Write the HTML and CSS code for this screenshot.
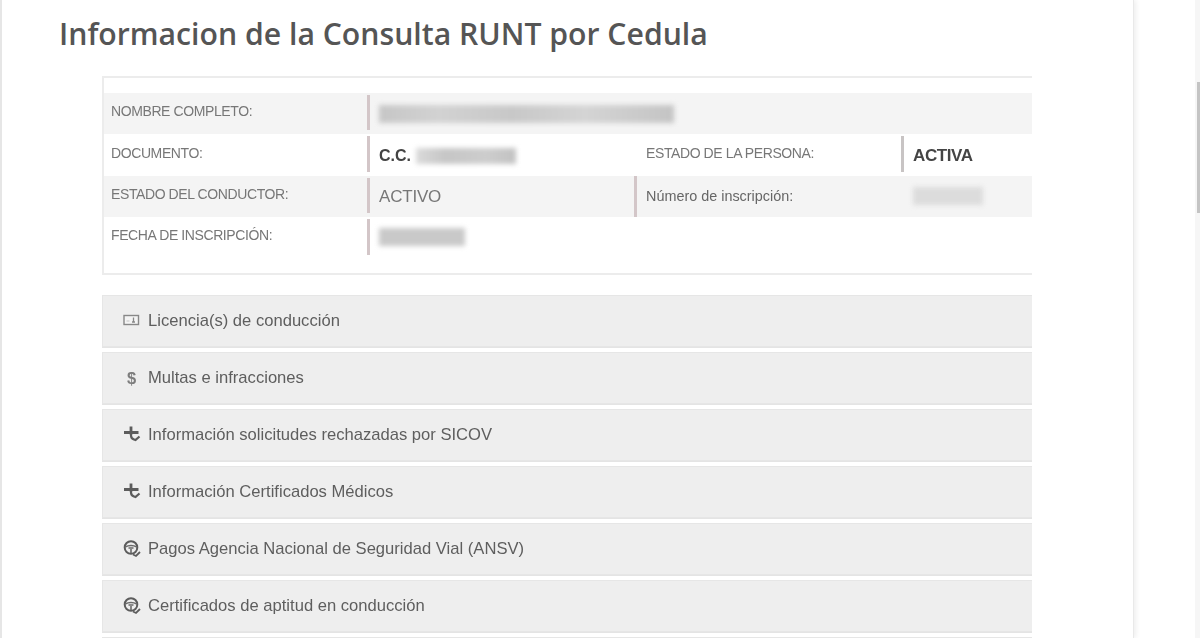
FILE: index.html
```html
<!DOCTYPE html>
<html lang="es">
<head>
  <meta charset="UTF-8" />
  <title>Consulta RUNT por Cedula</title>
  <link rel="stylesheet" href="styles.css">
</head>
<body>
  <div class="page">
    <main class="post">
      <h2 class="post-title">Informacion de la Consulta RUNT por Cedula</h2>

      <div class="capture">
        <section class="person">
          <div class="row shaded">
            <div class="label">NOMBRE COMPLETO:</div>
            <div class="value first"><span class="blur name-blur"></span></div>
          </div>
          <div class="row">
            <div class="label">DOCUMENTO:</div>
            <div class="value first doc"><b>C.C.</b><span class="blur doc-blur"></span></div>
            <div class="label second">ESTADO DE LA PERSONA:</div>
            <div class="value last"><b class="activa">ACTIVA</b></div>
          </div>
          <div class="row shaded">
            <div class="label">ESTADO DEL CONDUCTOR:</div>
            <div class="value first short big">ACTIVO</div>
            <div class="ruled">Número de inscripción:</div>
            <div class="value plain"><span class="blur num-blur"></span></div>
          </div>
          <div class="row">
            <div class="label">FECHA DE INSCRIPCIÓN:</div>
            <div class="value first"><span class="blur date-blur"></span></div>
          </div>
        </section>

        <div class="acc">
          <svg class="ico" viewBox="0 0 18 18"><rect x="1" y="3.500" width="14.500" height="9" fill="#f4f4f4" stroke="#888" stroke-width="1.400"/><path d="M10.500 5.500v5M9 10h3" stroke="#888" stroke-width="1.300"/><path d="M3.500 9h3" stroke="#c4c4c4"/></svg>
          Licencia(s) de conducción
        </div>
        <div class="acc">
          <span class="ico dollar">$</span>
          Multas e infracciones
        </div>
        <div class="acc">
          <svg class="ico" viewBox="0 0 18 18"><path d="M1 6.500h14.500M8 0.500v8" stroke="#5c5c5c" stroke-width="2.800" fill="none"/><path d="M8 8v1.500q0 3 3 4l1.500 0.500 4-3.500" stroke="#5c5c5c" stroke-width="2.200" fill="none"/></svg>
          Información solicitudes rechazadas por SICOV
        </div>
        <div class="acc">
          <svg class="ico" viewBox="0 0 18 18"><path d="M1 6.500h14.500M8 0.500v8" stroke="#5c5c5c" stroke-width="2.800" fill="none"/><path d="M8 8v1.500q0 3 3 4l1.500 0.500 4-3.500" stroke="#5c5c5c" stroke-width="2.200" fill="none"/></svg>
          Información Certificados Médicos
        </div>
        <div class="acc">
          <svg class="ico" viewBox="0 0 18 18"><circle cx="8" cy="7.500" r="6.300" fill="none" stroke="#5c5c5c" stroke-width="2"/><path d="M2 7q6-3 12 0M5.500 8h5M8 9v4" stroke="#6a6a6a" stroke-width="1.600" fill="none"/><path d="M10 14.500l3 1.500 4-4" stroke="#5c5c5c" stroke-width="1.800" fill="none"/></svg>
          Pagos Agencia Nacional de Seguridad Vial (ANSV)
        </div>
        <div class="acc">
          <svg class="ico" viewBox="0 0 18 18"><circle cx="8" cy="7.500" r="6.300" fill="none" stroke="#5c5c5c" stroke-width="2"/><path d="M2 7q6-3 12 0M5.500 8h5M8 9v4" stroke="#6a6a6a" stroke-width="1.600" fill="none"/><path d="M10 14.500l3 1.500 4-4" stroke="#5c5c5c" stroke-width="1.800" fill="none"/></svg>
          Certificados de aptitud en conducción
        </div>
        <div class="acc"></div>
      </div>
    </main>
    <div class="scroll-track">
      <div class="scroll-thumb"></div>
    </div>
  </div>
</body>
</html>
```

FILE: styles.css
```css
html, body {
  margin: 0;
  padding: 0;
  height: 100%;
  overflow: hidden;
  background-color: #fff;
}

body {
  font-family: "Liberation Sans", Arial, sans-serif;
  color: #666;
}

.page {
  display: flex;
  justify-content: space-between;
  height: 638px;
  overflow: hidden;
  background-color: #fff;
}

.post {
  width: 1134px;
  height: 638px;
  box-sizing: border-box;
  padding: 14px 0 0 57px;
  border-left: 2px solid #e6e6e6;
  border-right: 1px solid #e9e9e9;
  box-shadow: 2px 0 5px rgba(0, 0, 0, 0.07);
  background-color: #fff;
}

.post-title {
  margin: 0 0 22px;
  font-family: "Open Sans", sans-serif;
  font-size: 30.200px;
  line-height: 40px;
  font-weight: 600;
  color: #555;
}

.capture {
  width: 930px;
  margin-left: 43px;
  filter: blur(0.35px);
}

.person {
  height: 199px;
  box-sizing: border-box;
  padding-top: 15px;
  margin-bottom: 20px;
  border: 2px solid #ececec;
  border-right: 0;
}

.row {
  display: flex;
  height: 41.400px;
  box-sizing: border-box;
  align-items: center;
}

.shaded {
  background-color: #f4f4f4;
}

.label {
  width: 263px;
  box-sizing: border-box;
  padding: 0 0 5px 7px;
  font-size: 14px;
  letter-spacing: -0.4px;
  color: #777;
}

.value {
  display: flex;
  align-items: center;
  align-self: stretch;
  margin: 2px 0 4px;
  box-sizing: border-box;
  padding: 4px 0 0 9px;
}

.first {
  width: 279px;
  border-left: 3px solid #d3c6c8;
}

.short {
  width: 267px;
}

.big {
  font-size: 17px;
  letter-spacing: -0.2px;
  color: #777;
}

.doc b {
  font-size: 16px;
  color: #444;
  margin-right: 5px;
}

.second {
  width: 255px;
  padding-left: 0;
}

.ruled {
  display: flex;
  align-items: center;
  align-self: stretch;
  width: 279px;
  box-sizing: border-box;
  padding-left: 9px;
  border-left: 3px solid #d3c6c8;
  font-size: 14.400px;
  color: #666;
}

.last {
  border-left: 3px solid #c8c4c4;
}

.plain {
  padding-left: 0;
}

.activa {
  font-size: 17px;
  color: #444;
  letter-spacing: -0.4px;
}

.blur {
  display: block;
  flex: none;
  background-color: #c9c9c9;
  filter: blur(2.500px);
}

.name-blur {
  width: 295px;
  height: 18px;
  margin-top: -1px;
  background: linear-gradient(90deg, #c6c6c6, #d2d2d2 20%, #c8c8c8 45%, #d4d4d4 70%, #c4c4c4);
}

.doc-blur {
  width: 100px;
  height: 16px;
  background: linear-gradient(90deg, #dadada, #c6c6c6 30%, #cdcdcd 70%, #c2c2c2);
}

.num-blur {
  width: 70px;
  height: 18px;
  margin-top: -2px;
  background-color: #dcdcdc;
}

.date-blur {
  width: 86px;
  height: 18px;
  margin-top: -4px;
}

.acc {
  display: flex;
  align-items: center;
  height: 52px;
  box-sizing: border-box;
  margin-bottom: 5px;
  padding-left: 20px;
  background-color: #eee;
  border: 1px solid #e6e6e6;
  border-right: 0;
  font-size: 16.600px;
  color: #5e5e5e;
  box-shadow: 0 1px 0 #e4e4e4;
}

.ico {
  width: 18px;
  height: 18px;
  margin-right: 7px;
  flex: none;
}

.dollar {
  box-sizing: border-box;
  padding-left: 4px;
  font-weight: bold;
  font-size: 16.500px;
  line-height: 18px;
  color: #7d7d7d;
}

.scroll-track {
  width: 5px;
  height: 638px;
  padding-top: 82px;
  box-sizing: border-box;
  background-color: #f6f6f6;
}

.scroll-thumb {
  width: 3px;
  height: 131px;
  margin-left: 2px;
  background-color: #c4c4c4;
}
```
